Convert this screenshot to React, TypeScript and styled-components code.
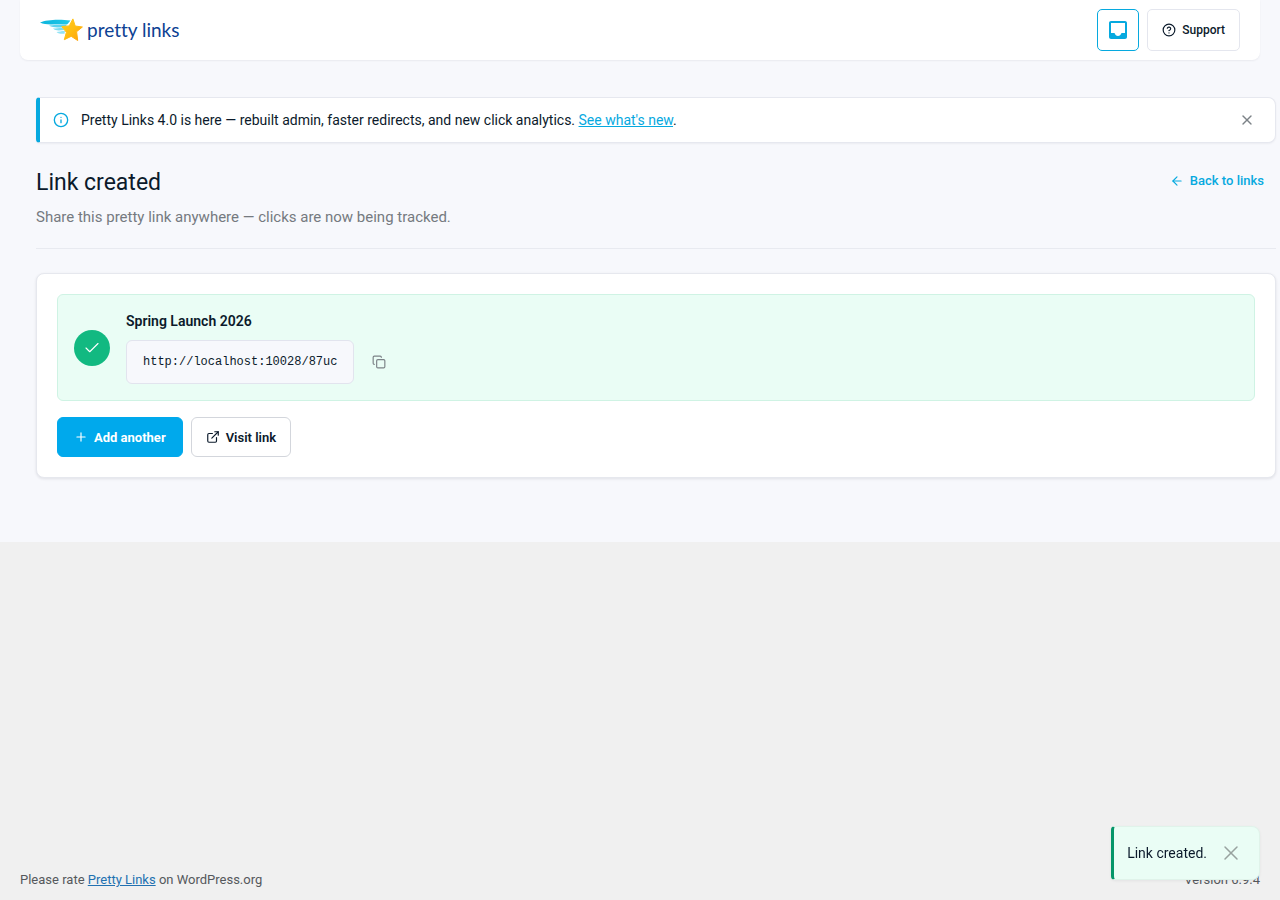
import React, { useState } from "react";
import styled, { createGlobalStyle } from "styled-components";
import {
  ArrowLeft,
  Check,
  CircleHelp,
  Copy,
  ExternalLink,
  Info,
  Plus,
  X,
} from "lucide-react";

const GlobalStyle = createGlobalStyle`
  *, *::before, *::after { box-sizing: border-box; }
  body {
    margin: 0;
    background: #f0f0f0;
    color: #0b1a2b;
    font-family: Roboto, "Liberation Sans", sans-serif;
    font-size: 14px;
    line-height: 20px;
  }
  button { font-family: inherit; cursor: pointer; }
  svg { flex: none; }
`;

const Page = styled.div`
  display: flex;
  flex-direction: column;
  min-height: 100vh;
`;

const Admin = styled.div`
  background: #f7f8fc;
  padding-bottom: 64px;
`;

const TopBar = styled.header`
  display: flex;
  align-items: center;
  justify-content: space-between;
  height: 60px;
  margin: 0 20px;
  padding: 0 20px;
  background: #fff;
  border-radius: 0 0 8px 8px;
  box-shadow: 0 1px 2px rgba(16, 24, 40, 0.06);
`;

const Brand = styled.a`
  display: flex;
  align-items: center;
  gap: 4px;
  color: #0d4193;
  font-family: Lato, sans-serif;
  font-size: 19px;
  font-variant-ligatures: none;
  line-height: 24px;
  text-decoration: none;
`;

const TopActions = styled.div`
  display: flex;
  gap: 8px;
`;

const TopButton = styled.button<{ $active?: boolean }>`
  display: flex;
  align-items: center;
  justify-content: center;
  gap: 6px;
  height: 42px;
  padding: 0 ${(p) => (p.$active ? "10px" : "14px")};
  border: 1px solid ${(p) => (p.$active ? "#06a9df" : "#e4e6ee")};
  border-radius: 5px;
  background: #fff;
  color: ${(p) => (p.$active ? "#06a9df" : "#0b1a2b")};
  font-size: 12px;
  font-weight: 500;
`;

const Content = styled.main`
  padding: 37px 4px 0 36px;
`;

const Notice = styled.div`
  display: flex;
  align-items: center;
  gap: 12px;
  height: 46px;
  padding: 0 20px 0 13px;
  border: 1px solid #e6e8ef;
  border-left: 4px solid #06a9df;
  border-radius: 4px 8px 8px 4px;
  background: #fff;
  box-shadow: 0 1px 2px rgba(16, 24, 40, 0.05);
`;

const NoticeText = styled.p`
  flex: 1;
  margin: 0;
`;

const TextLink = styled.a`
  color: #06a9df;
`;

const IconButton = styled.button`
  display: flex;
  align-items: center;
  justify-content: center;
  padding: 0;
  border: 0;
  background: none;
  color: #7c8287;
`;

const PageHead = styled.div`
  display: flex;
  justify-content: space-between;
  align-items: flex-start;
  margin: 24px 0;
  padding-bottom: 19px;
  border-bottom: 1px solid #e8eaf0;
`;

const Title = styled.h1`
  margin: 0 0 6px;
  font-size: 23px;
  font-weight: 400;
  line-height: 32px;
`;

const Subtitle = styled.p`
  margin: 0;
  color: #757a80;
  font-size: 15px;
  line-height: 24px;
`;

const BackLink = styled.a`
  display: flex;
  align-items: center;
  gap: 6px;
  padding: 4px 12px;
  color: #06a9df;
  font-size: 13px;
  font-weight: 500;
  text-decoration: none;
`;

const Card = styled.section`
  padding: 20px;
  border: 1px solid #e6e8ee;
  border-radius: 8px;
  background: #fff;
  box-shadow: 0 1px 3px rgba(16, 24, 40, 0.1);
`;

const Success = styled.div`
  display: flex;
  align-items: center;
  gap: 16px;
  padding: 16px;
  border: 1px solid #cff3e4;
  border-radius: 6px;
  background: #eafdf5;
`;

const CheckBadge = styled.span`
  display: flex;
  align-items: center;
  justify-content: center;
  width: 36px;
  height: 36px;
  border-radius: 50%;
  background: #12b981;
  color: #fff;
`;

const LinkName = styled.h2`
  margin: 0 0 9px;
  font-size: 14px;
  font-weight: 600;
  line-height: 20px;
`;

const UrlRow = styled.div`
  display: flex;
  align-items: center;
  gap: 18px;
`;

const Url = styled.code`
  padding: 11px 16px;
  border: 1px solid #e2e4ee;
  border-radius: 6px;
  background: #f7f8fc;
  color: #0b1a2b;
  font-family: "Liberation Mono", monospace;
  font-size: 12px;
  line-height: 20px;
`;

const Actions = styled.div`
  display: flex;
  gap: 8px;
  margin-top: 16px;
`;

const ActionButton = styled.button<{ $primary?: boolean }>`
  display: flex;
  align-items: center;
  gap: 6px;
  height: 40px;
  padding: 0 ${(p) => (p.$primary ? "16px" : "14px")};
  border: 1px solid ${(p) => (p.$primary ? "#00a9ec" : "#d3d6dc")};
  border-radius: 6px;
  background: ${(p) => (p.$primary ? "#00a9ec" : "#fff")};
  color: ${(p) => (p.$primary ? "#fff" : "#0b1a2b")};
  font-size: 13px;
  font-weight: ${(p) => (p.$primary ? 700 : 600)};
`;

const Footer = styled.footer`
  display: flex;
  justify-content: space-between;
  margin-top: auto;
  padding: 10px 20px;
  color: #55585c;
  font-size: 13px;

  p { margin: 0; }
  a { color: #2271b1; }
`;

const Toast = styled.div`
  position: fixed;
  right: 20px;
  bottom: 20px;
  display: flex;
  align-items: center;
  gap: 12px;
  height: 54px;
  padding: 0 16px 0 13px;
  border: 1px solid #e0f3ea;
  border-left: 3px solid #059669;
  border-radius: 4px 8px 8px 4px;
  background: #eafdf5;
  box-shadow: 0 1px 3px rgba(16, 24, 40, 0.06);
`;

function StarMark() {
  return (
    <svg width="43" height="24" viewBox="0 0 43 24" aria-hidden="true">
      <defs>
        <linearGradient id="star" x1="0" y1="0" x2="1" y2="1">
          <stop offset="0" stopColor="#ffc91f" />
          <stop offset="0.5" stopColor="#ffbe12" />
          <stop offset="1" stopColor="#ff9f0a" />
        </linearGradient>
        <linearGradient id="wing" x1="0" y1="0" x2="1" y2="0">
          <stop offset="0" stopColor="#0ab4dc" />
          <stop offset="1" stopColor="#22c9ea" />
        </linearGradient>
      </defs>
      <path d="M0 4.6C7 1.2 21 1.1 30.500 2.600L27.600 6C18 5.600 7 8 0 4.600Z" fill="url(#wing)" />
      <path d="M9 7.6C14 7.2 21 5.8 27.500 6.400L24.500 9.200C21 9 14 10.600 9 7.600Z" fill="#5fd3ee" />
      <path d="M13 10.6C16 10.5 19 9.6 22.500 9.700L24.500 12C20 12.300 16 13.200 13 10.600Z" fill="#7bdcf2" />
      <path d="M16.500 13.900C19 13.700 21.500 12.900 25 13L24.500 15.700C22 15.700 19 16.200 16.500 13.900Z" fill="#93e3f5" />
      <path
        d="M32.900.9L35.200 8L42.400 9L36.600 13.700L37.700 22.500L31.200 18.300L24.300 21.700L26.400 14.300L21.800 8.600L29.200 7.900Z"
        fill="url(#star)"
        stroke="url(#star)"
        strokeWidth="1"
        strokeLinejoin="round"
      />
    </svg>
  );
}

function InboxIcon() {
  return (
    <svg width="20" height="20" viewBox="0 0 20 20" aria-hidden="true">
      <path
        fill="currentColor"
        fillRule="evenodd"
        d="M3 1H17C18.100 1 19 1.900 19 3V17C19 18.100 18.100 19 17 19H3C1.900 19 1 18.100 1 17V3C1 1.900 1.900 1 3 1ZM3 3V13H6.500C7.200 14.800 8.400 16 10 16C11.600 16 12.800 14.800 13.500 13H17V3Z"
      />
    </svg>
  );
}

export default function App() {
  const [noticeOpen, setNoticeOpen] = useState(true);
  const [toastOpen, setToastOpen] = useState(true);

  return (
    <Page>
      <GlobalStyle />
      <Admin>
        <TopBar>
          <Brand href="#">
            <StarMark />
            <span>pretty links</span>
          </Brand>
          <TopActions>
            <TopButton type="button" $active aria-label="Inbox">
              <InboxIcon />
            </TopButton>
            <TopButton type="button">
              <CircleHelp size={14} />
              Support
            </TopButton>
          </TopActions>
        </TopBar>
        <Content>
          {noticeOpen && (
            <Notice>
              <Info size={16} color="#06a9df" />
              <NoticeText>
                Pretty Links 4.0 is here — rebuilt admin, faster redirects, and new click analytics.{" "}
                <TextLink href="#">See what's new</TextLink>.
              </NoticeText>
              <IconButton type="button" aria-label="Dismiss" onClick={() => setNoticeOpen(false)}>
                <X size={16} strokeWidth={2} />
              </IconButton>
            </Notice>
          )}
          <PageHead>
            <div>
              <Title>Link created</Title>
              <Subtitle>Share this pretty link anywhere — clicks are now being tracked.</Subtitle>
            </div>
            <BackLink href="#">
              <ArrowLeft size={14} />
              Back to links
            </BackLink>
          </PageHead>
          <Card>
            <Success>
              <CheckBadge>
                <Check size={18} strokeWidth={1.5} />
              </CheckBadge>
              <div>
                <LinkName>Spring Launch 2026</LinkName>
                <UrlRow>
                  <Url>http://localhost:10028/87uc</Url>
                  <IconButton type="button" aria-label="Copy link">
                    <Copy size={14} />
                  </IconButton>
                </UrlRow>
              </div>
            </Success>
            <Actions>
              <ActionButton type="button" $primary>
                <Plus size={14} />
                Add another
              </ActionButton>
              <ActionButton type="button">
                <ExternalLink size={14} />
                Visit link
              </ActionButton>
            </Actions>
          </Card>
        </Content>
      </Admin>
      <Footer>
        <p>
          Please rate <a href="#">Pretty Links</a> on WordPress.org
        </p>
        <p>Version 6.9.4</p>
      </Footer>
      {toastOpen && (
        <Toast role="status">
          Link created.
          <IconButton type="button" aria-label="Close" onClick={() => setToastOpen(false)}>
            <X size={24} strokeWidth={1.5} color="#98a29f" />
          </IconButton>
        </Toast>
      )}
    </Page>
  );
}
